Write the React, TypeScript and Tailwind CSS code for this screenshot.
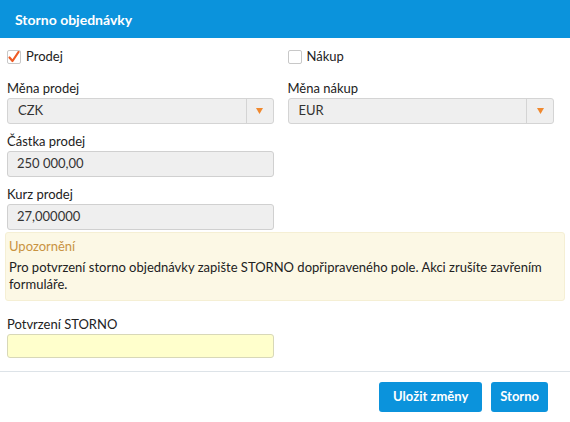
import React from "react";

function Select({ value }: { value: string }) {
  return (
    <div className="flex h-[26px] items-stretch rounded-[3px] border border-[#d4d4d4] bg-[#efefef]">
      <span className="flex flex-1 items-center pl-[10px] text-[13px] text-[#333]">{value}</span>
      <span className="flex w-[27px] items-center justify-center border-l border-[#d4d4d4]">
        <svg width="7" height="6" viewBox="0 0 7 6">
          <path d="M0 0h7L3.5 6z" fill="#f0892f" />
        </svg>
      </span>
    </div>
  );
}

function Field({ label, value }: { label: string; value: string }) {
  return (
    <div className="flex flex-col">
      <label className="mb-[1px] text-[13px] leading-[17px]">{label}</label>
      <div className="flex h-[26px] items-center rounded-[3px] border border-[#d0d0d0] bg-[#efefef] pl-[9px] text-[13px] text-[#333]">
        {value}
      </div>
    </div>
  );
}

export default function App() {
  return (
    <div className="h-[422px] w-[570px] overflow-hidden bg-white font-['Lato',sans-serif] text-[#222]">
      <header className="flex h-[38px] items-center bg-[#0b93dc] px-[15px]">
        <h1 className="text-[14px] font-bold text-white">Storno objednávky</h1>
      </header>

      <div className="pl-[7px] pr-[16px] pt-[11px]">
        <div className="grid grid-cols-2 gap-x-[14px]">
          <label className="flex h-[16px] items-center gap-[5px] text-[13px]">
            <span className="flex h-[14px] w-[14px] items-center justify-center rounded-[2px] border border-[#c8c8c8] bg-white">
              <svg width="12" height="12" viewBox="0 0 12 12">
                <path d="M1.5 6.5 4.5 10 10.5 1" fill="none" stroke="#ee5a24" strokeWidth="2.2" strokeLinecap="round" strokeLinejoin="round" />
              </svg>
            </span>
            Prodej
          </label>
          <label className="flex h-[16px] items-center gap-[5px] text-[13px]">
            <span className="h-[14px] w-[14px] rounded-[2px] border border-[#c8c8c8] bg-white" />
            Nákup
          </label>
        </div>

        <div className="mt-[15px] grid grid-cols-2 gap-x-[14px]">
          <div className="flex flex-col">
            <label className="mb-[1px] text-[13px] leading-[17px]">Měna prodej</label>
            <Select value="CZK" />
          </div>
          <div className="flex flex-col">
            <label className="mb-[1px] text-[13px] leading-[17px]">Měna nákup</label>
            <Select value="EUR" />
          </div>
        </div>

        <div className="mt-[9px] grid grid-cols-2 gap-x-[14px]">
          <Field label="Částka prodej" value="250 000,00" />
        </div>
        <div className="mt-[9px] grid grid-cols-2 gap-x-[14px]">
          <Field label="Kurz prodej" value="27,000000" />
        </div>
      </div>

      <div className="mx-[5px] mt-[2px] rounded-[3px] border border-[#f5efd4] bg-[#fcf8e5] px-[3px] pb-[7px] pt-[5px] text-[13px] leading-[17px]">
        <p className="text-[#c99342]">Upozornění</p>
        <p className="mt-[4px] text-[#222]">
          Pro potvrzení storno objednávky zapište STORNO dopřipraveného pole. Akci zrušíte zavřením formuláře.
        </p>
      </div>

      <div className="pl-[7px] pr-[16px] pt-[15px]">
        <div className="grid grid-cols-2 gap-x-[14px]">
          <div className="flex flex-col">
            <label className="mb-[1px] text-[13px] leading-[17px]">Potvrzení STORNO</label>
            <div className="h-[24px] rounded-[3px] border border-[#d8d8b8] bg-[#ffffcc]" />
          </div>
        </div>
      </div>

      <div className="mt-[13px] flex justify-end gap-[9px] border-t border-[#dde3e8] pr-[22px] pt-[10px]">
        <button className="h-[30px] rounded-[3px] bg-[#0b93dc] px-[14px] text-[13px] font-bold text-white">
          Uložit změny
        </button>
        <button className="h-[30px] rounded-[3px] bg-[#0b93dc] px-[9px] text-[13px] font-bold text-white">
          Storno
        </button>
      </div>
    </div>
  );
}
